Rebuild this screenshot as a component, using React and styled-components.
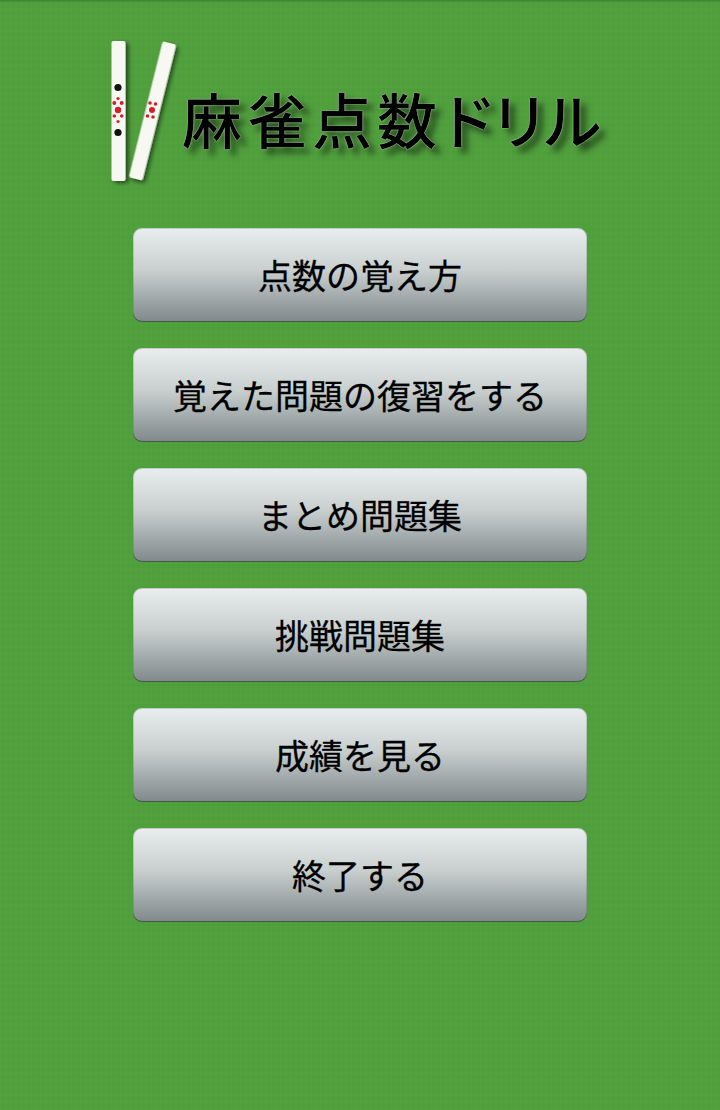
import React from 'react'
import styled, { createGlobalStyle } from 'styled-components'

const GlobalStyle = createGlobalStyle`
  html, body {
    margin: 0;
    padding: 0;
    background: #50a03c;
  }
`

const Page = styled.div`
  width: 720px;
  height: 1110px;
  overflow: hidden;
  display: flex;
  flex-direction: column;
  align-items: center;
  font-family: "Noto Sans CJK JP", "Noto Sans", sans-serif;
  background-color: #50a03c;
  background-image:
    linear-gradient(180deg, rgba(20, 60, 20, 0.3) 0, rgba(20, 60, 20, 0) 3px),
    repeating-linear-gradient(90deg, rgba(255, 255, 255, 0.008) 0 2px, rgba(0, 0, 0, 0.008) 2px 5px),
    repeating-linear-gradient(0deg, rgba(255, 255, 255, 0.008) 0 3px, rgba(0, 0, 0, 0.008) 3px 7px);
`

const Header = styled.header`
  width: 720px;
  height: 228px;
  box-sizing: border-box;
  padding: 38px 0 0 108px;
  display: flex;
  align-items: flex-start;
`

const Tiles = styled.svg`
  width: 74px;
  height: 148px;
  flex: none;
`

const Title = styled.h1`
  margin: 44px 0 0 0;
  display: flex;
  align-items: center;
  font-size: 60px;
  line-height: 72px;
  font-weight: 500;
  color: #000;
  white-space: nowrap;
  text-shadow:
    0 0 1px #d8e4d0,
    0 0 1px #d8e4d0,
    6px 6px 6px rgba(0, 0, 0, 0.5);
`

const TitleKanji = styled.span`
  letter-spacing: 5px;
`

const TitleKana = styled.span`
  letter-spacing: -7.5px;
  margin-left: -5px;
`

const Menu = styled.nav`
  display: flex;
  flex-direction: column;
  gap: 26px;
`

const MenuButton = styled.button`
  width: 454px;
  height: 94px;
  padding: 0 0 2px;
  box-sizing: border-box;
  border: none;
  border-radius: 9px;
  background: linear-gradient(180deg, #e9eded 0%, #c9cfcf 45%, #7f888a 100%);
  box-shadow:
    inset 0 0 0 1px rgba(50, 80, 50, 0.2),
    inset 0 -1px 0 rgba(40, 60, 40, 0.6);
  font-family: inherit;
  font-size: 34px;
  font-weight: 400;
  color: #000;
  -webkit-text-stroke: 0.3px #000;
`

const labels = [
  '点数の覚え方',
  '覚えた問題の復習をする',
  'まとめ問題集',
  '挑戦問題集',
  '成績を見る',
  '終了する',
]

function TileArt () {
  return (
    <Tiles viewBox="0 0 74 148" aria-hidden="true">
      <defs>
        <filter id="tileShadow" x="-50%" y="-10%" width="200%" height="120%">
          <feDropShadow dx="3" dy="2" stdDeviation="2.2" floodColor="#000" floodOpacity="0.55" />
        </filter>
      </defs>
      <rect x="3.5" y="3" width="14" height="140" rx="2" fill="#f8f8f3" filter="url(#tileShadow)" />
      <g transform="rotate(14 45 73)">
        <rect x="37.5" y="3" width="14" height="140" rx="2" fill="#f8f8f3" filter="url(#tileShadow)" />
      </g>
      <circle cx="10" cy="49.5" r="3.6" fill="#111" />
      <circle cx="10" cy="94.5" r="3.6" fill="#111" />
      <g fill="#d2202a">
        <circle cx="10" cy="72" r="3.2" />
        <circle cx="10" cy="60.5" r="1.6" />
        <circle cx="6.3" cy="65" r="2" />
        <circle cx="13.7" cy="65" r="2" />
        <circle cx="6.3" cy="78" r="1.8" />
        <circle cx="13.7" cy="78" r="1.8" />
        <circle cx="10" cy="83.5" r="1.6" />
      </g>
      <g fill="#d2202a">
        <circle cx="44" cy="72" r="3" />
        <circle cx="42" cy="65" r="1.8" />
        <circle cx="47.5" cy="66" r="1.8" />
        <circle cx="39.5" cy="78" r="1.8" />
        <circle cx="45" cy="79" r="1.8" />
      </g>
    </Tiles>
  )
}

function App () {
  return (
    <Page>
      <GlobalStyle />
      <Header>
        <TileArt />
        <Title>
          <TitleKanji>麻雀点数</TitleKanji>
          <TitleKana>ドリル</TitleKana>
        </Title>
      </Header>
      <Menu>
        {labels.map((label) => (
          <MenuButton key={label}>{label}</MenuButton>
        ))}
      </Menu>
    </Page>
  )
}

export default App
